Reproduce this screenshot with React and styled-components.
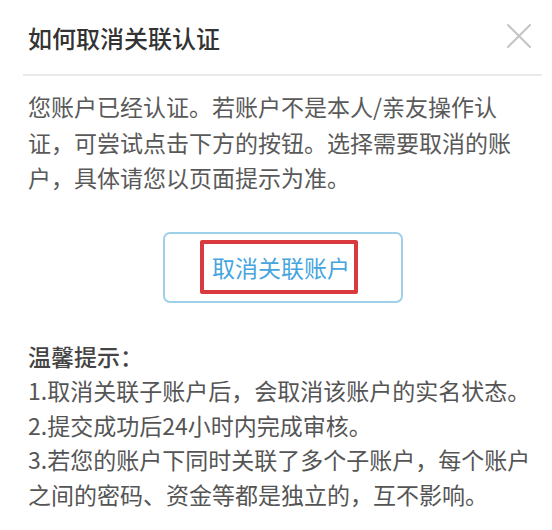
import styled, { createGlobalStyle } from "styled-components"

const GlobalStyle = createGlobalStyle`
    html, body {
        margin: 0;
        padding: 0;
        background: #FFF;
    }
    body {
        font-family: "Noto Sans CJK SC", "Noto Sans", sans-serif;
    }
`;

const paragraph = [
    '您账户已经认证。若账户不是本人/亲友操作认',
    '证，可尝试点击下方的按钮。选择需要取消的账',
    '户，具体请您以页面提示为准。',
]

const tips = [
    '1.取消关联子账户后，会取消该账户的实名状态。',
    '2.提交成功后24小时内完成审核。',
    '3.若您的账户下同时关联了多个子账户，每个账户',
    '之间的密码、资金等都是独立的，互不影响。',
]

function CloseIcon() {
    return (
        <svg width="26" height="26" viewBox="0 0 26 26">
            <path d="M2 2 L24 24 M24 2 L2 24" stroke="#C4C4C4" strokeWidth="2" strokeLinecap="round" />
        </svg>
    )
}

export default function App() {
    return (
        <>
            <GlobalStyle />
            <Dialog>
                <Header>
                    <Title>如何取消关联认证</Title>
                    <CloseBtn><CloseIcon /></CloseBtn>
                </Header>

                <Body>
                    <Text>
                        {paragraph.map((line) => <Line key={line}>{line}</Line>)}
                    </Text>

                    <ButtonRow>
                        <UnlinkBtn>
                            <Mark>取消关联账户</Mark>
                        </UnlinkBtn>
                    </ButtonRow>

                    <Tips>
                        <TipsTitle>温馨提示：</TipsTitle>
                        {tips.map((line) => <Line key={line}>{line}</Line>)}
                    </Tips>
                </Body>
            </Dialog>
        </>
    )
}

const Dialog = styled.div`
    width: 552px;
    height: 530px;
    box-sizing: border-box;
    padding: 0 10px 0 23px;
    background: #FFF;
    overflow: hidden;
`;

const Header = styled.div`
    height: 76px;
    border-bottom: 2px solid #EAEAEA;
    display: flex;
    align-items: center;
    justify-content: space-between;
    padding: 0 10px 0 5px;
    box-sizing: border-box;
`;

const Title = styled.div`
    font-size: 24px;
    font-weight: 500;
    color: #333;
    line-height: 1;
    margin-top: 2px;
`;

const CloseBtn = styled.div`
    width: 26px;
    height: 26px;
    display: flex;
    margin-top: -2px;
`;

const Body = styled.div`
    display: flex;
    flex-direction: column;
    padding: 13px 0 0 5px;
`;

const Text = styled.div`
    font-size: 23px;
    line-height: 35.5px;
    color: #595959;
`;

const Line = styled.div`
    white-space: nowrap;
`;

const ButtonRow = styled.div`
    display: flex;
    justify-content: center;
    margin-top: 36px;
    padding-right: 0;
`;

const UnlinkBtn = styled.div`
    width: 240px;
    height: 71px;
    box-sizing: border-box;
    border: 2px solid #9FD0EA;
    border-radius: 7px;
    display: flex;
    align-items: center;
    padding-left: 35px;
    margin-left: -4px;
`;

const Mark = styled.div`
    width: 158px;
    height: 54px;
    box-sizing: border-box;
    border: 4px solid #D93A3E;
    border-radius: 2px;
    display: flex;
    align-items: center;
    justify-content: center;
    padding-left: 4px;
    font-size: 23px;
    color: #45A5DE;
`;

const Tips = styled.div`
    margin-top: 36px;
    font-size: 23px;
    line-height: 34.5px;
    color: #555;
`;

const TipsTitle = styled.div`
    font-weight: 500;
    color: #444;
`;
